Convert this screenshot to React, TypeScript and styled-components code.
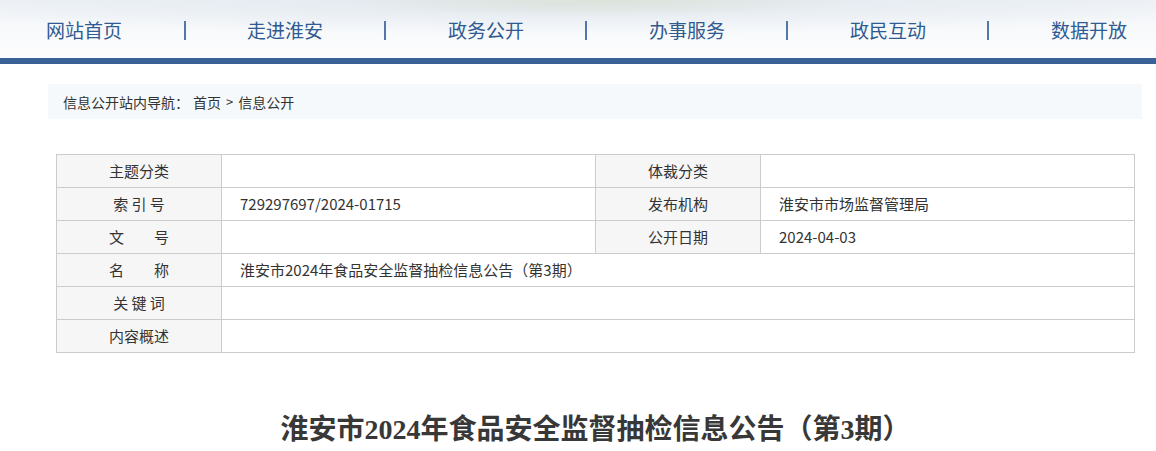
import { Fragment } from 'react';
import styled, { createGlobalStyle } from 'styled-components';

const GlobalStyle = createGlobalStyle`
  body {
    margin: 0;
    background: #fff;
    font-family: 'Noto Sans CJK SC', 'Noto Sans', sans-serif;
    color: #333;
  }
`;

const Header = styled.header`
  height: 58px;
  border-bottom: 6px solid #3a6296;
  background:
    radial-gradient(ellipse 260px 18px at 600px 0px, rgba(214, 222, 200, 0.55), rgba(255, 255, 255, 0) 100%),
    radial-gradient(ellipse 700px 30px at 560px 4px, rgba(220, 228, 236, 0.7), rgba(255, 255, 255, 0) 100%),
    linear-gradient(to bottom, #eef2f6 0%, #f6f8fa 40%, #fdfdfe 100%);
`;

const Nav = styled.nav`
  display: flex;
  align-items: center;
  justify-content: space-between;
  height: 100%;
  padding: 0 29px 0 46px;
  box-sizing: border-box;
`;

const NavItem = styled.a`
  font-size: 19px;
  line-height: 24px;
  color: #2f5a92;
  text-decoration: none;
  white-space: nowrap;
  margin-top: 2px;
`;

const NavSep = styled.span`
  width: 2px;
  height: 19px;
  background: #5576a8;
  margin-top: 2px;
`;

const Main = styled.main`
  padding: 20px 14px 0 48px;
`;

const Crumbs = styled.div`
  height: 35px;
  display: flex;
  align-items: center;
  padding-left: 15px;
  background: #f5f9fc;
  font-size: 14px;
  color: #333;
`;

const CrumbLink = styled.a`
  color: #333;
  text-decoration: none;
  margin-left: 4px;
`;

const CrumbArrow = styled.span`
  margin: 0 5px;
  font-size: 13px;
`;

const Content = styled.section`
  padding: 35px 7px 0 8px;
`;

const InfoTable = styled.table`
  width: 100%;
  border-collapse: collapse;
  table-layout: fixed;
  font-size: 15px;
`;

const Col = styled.col<{ $w?: number }>`
  width: ${(p) => (p.$w ? `${p.$w}px` : 'auto')};
`;

const Cell = styled.td<{ $label?: boolean }>`
  height: 32px;
  padding: 0 ${(p) => (p.$label ? '0' : '18px')};
  border: 1px solid #cccccc;
  background: ${(p) => (p.$label ? '#f6f6f6' : '#fff')};
  text-align: ${(p) => (p.$label ? 'center' : 'left')};
  color: #333;
  line-height: 20px;
  white-space: pre;
`;

const Title = styled.h1`
  margin: 57px 0 0;
  text-align: center;
  font-family: 'Liberation Serif', 'Noto Sans CJK SC', serif;
  font-weight: 700;
  font-size: 28px;
  line-height: 40px;
  color: #383838;
`;

const navItems = ['网站首页', '走进淮安', '政务公开', '办事服务', '政民互动', '数据开放'];

export default function App() {
  return (
    <>
      <GlobalStyle />
      <Header>
        <Nav>
          {navItems.map((item, i) => (
            <Fragment key={item}>
              {i > 0 && <NavSep />}
              <NavItem href="#">{item}</NavItem>
            </Fragment>
          ))}
        </Nav>
      </Header>
      <Main>
        <Crumbs>
          <span>信息公开站内导航：</span>
          <CrumbLink href="#">首页</CrumbLink>
          <CrumbArrow>&gt;</CrumbArrow>
          <span>信息公开</span>
        </Crumbs>
        <Content>
          <InfoTable>
            <colgroup>
              <Col $w={165} />
              <Col $w={374} />
              <Col $w={165} />
              <Col />
            </colgroup>
            <tbody>
              <tr>
                <Cell $label>主题分类</Cell>
                <Cell></Cell>
                <Cell $label>体裁分类</Cell>
                <Cell></Cell>
              </tr>
              <tr>
                <Cell $label>索 引 号</Cell>
                <Cell>729297697/2024-01715</Cell>
                <Cell $label>发布机构</Cell>
                <Cell>淮安市市场监督管理局</Cell>
              </tr>
              <tr>
                <Cell $label>文　　号</Cell>
                <Cell></Cell>
                <Cell $label>公开日期</Cell>
                <Cell>2024-04-03</Cell>
              </tr>
              <tr>
                <Cell $label>名　　称</Cell>
                <Cell colSpan={3}>淮安市2024年食品安全监督抽检信息公告（第3期）</Cell>
              </tr>
              <tr>
                <Cell $label>关 键 词</Cell>
                <Cell colSpan={3}></Cell>
              </tr>
              <tr>
                <Cell $label>内容概述</Cell>
                <Cell colSpan={3}></Cell>
              </tr>
            </tbody>
          </InfoTable>
          <Title>淮安市2024年食品安全监督抽检信息公告（第3期）</Title>
        </Content>
      </Main>
    </>
  );
}
